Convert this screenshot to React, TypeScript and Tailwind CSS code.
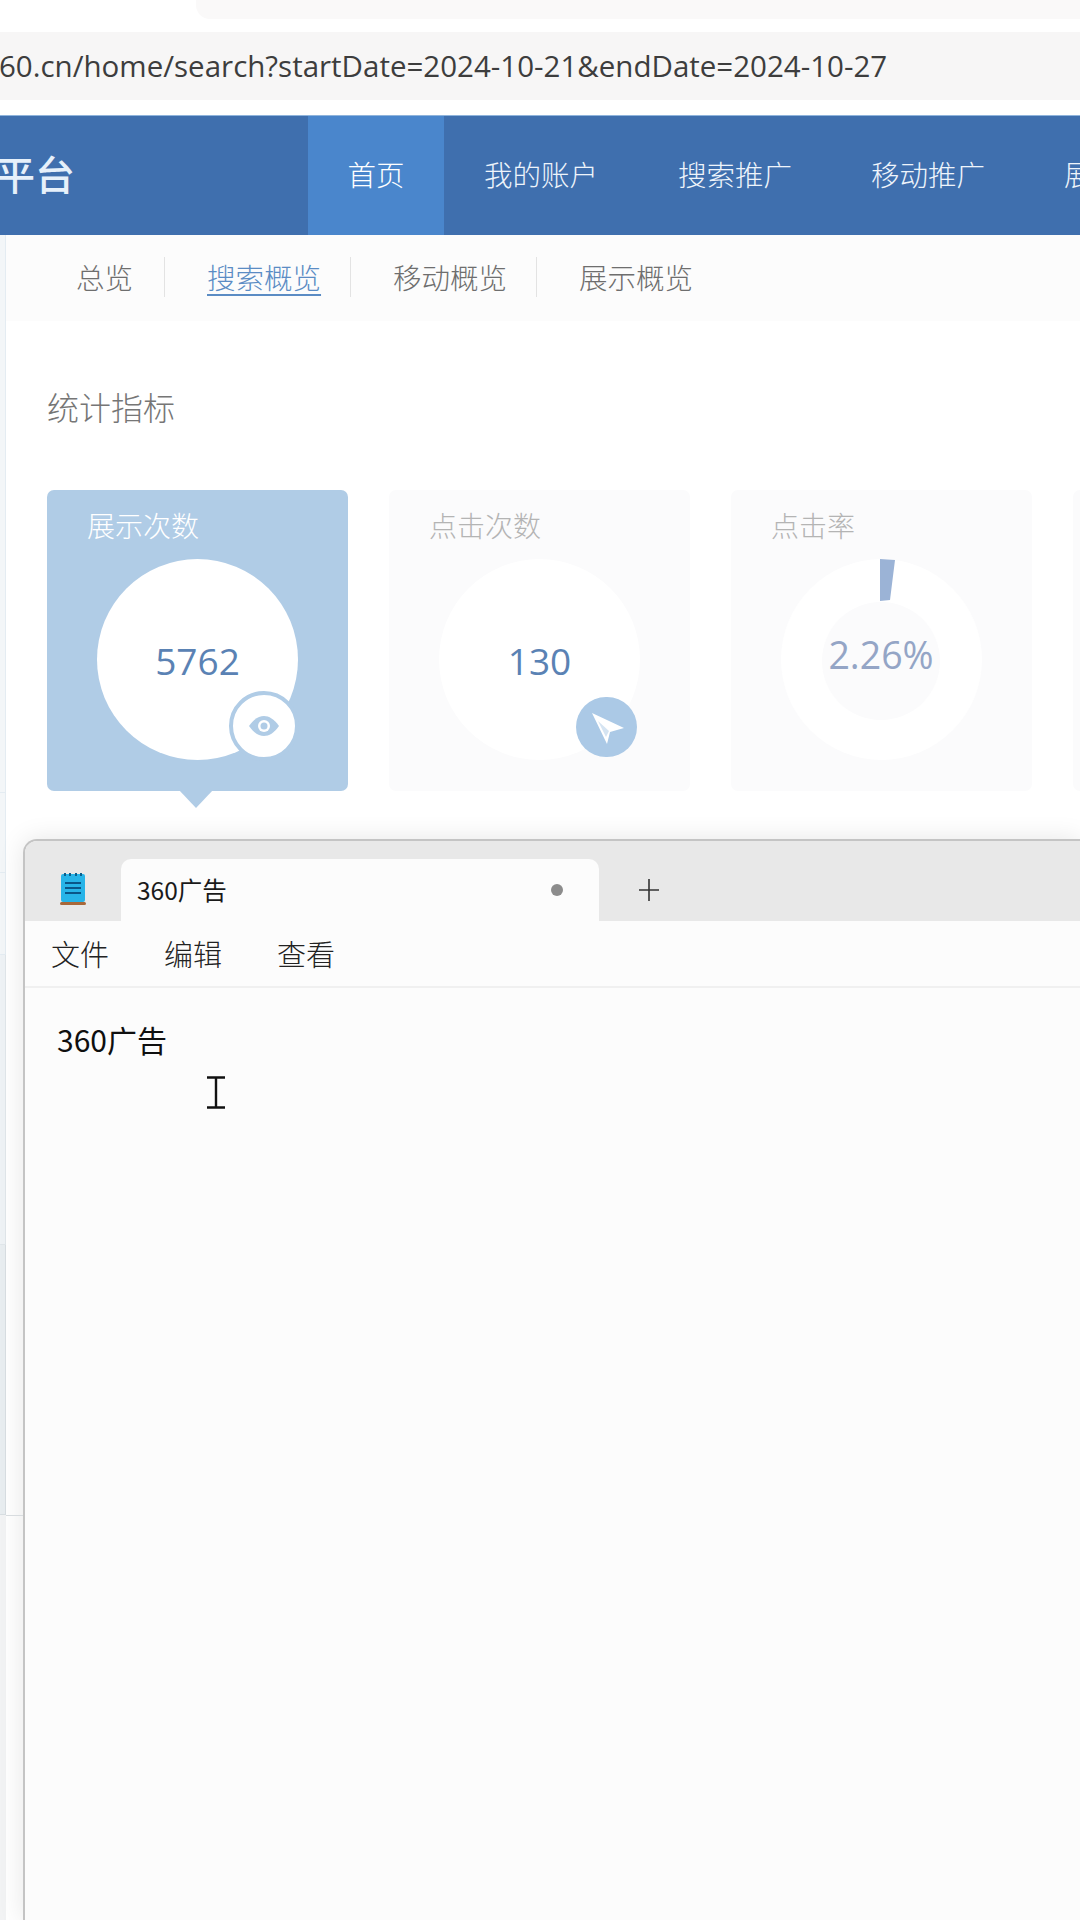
import React from "react";

const cjk = "font-['Noto_Sans_CJK_SC','Noto_Sans',sans-serif]";
const num = "font-['Open_Sans','Noto_Sans_CJK_SC',sans-serif]";

function Card({ title, active, children }: { title: string; active?: boolean; children: React.ReactNode }) {
  return (
    <div className={`relative flex h-[301px] w-[301px] shrink-0 flex-col items-center rounded-[7px] ${active ? "bg-[#b0cce6]" : "bg-[#fbfbfc]"}`}>
      <div className={`${cjk} mt-[17px] ml-[40px] self-start text-[28px] leading-[36px] font-light ${active ? "text-white" : "text-[#b4b4b4]"}`}>{title}</div>
      <div className="relative mt-[16px] h-[201px] w-[201px] rounded-full bg-white">{children}</div>
      {active && <div className="absolute top-[300px] left-[132px] h-0 w-0 border-x-[17px] border-t-[18px] border-x-transparent border-t-[#b0cce6]" />}
    </div>
  );
}

export default function App() {
  return (
    <div className="flex h-[1920px] w-[1080px] flex-col overflow-hidden bg-white">
      <div className="flex h-[19px] shrink-0 justify-end">
        <div className="h-full w-[884px] rounded-bl-[14px] bg-[#faf9f9]" />
      </div>
      <div className={`${num} mt-[13px] flex h-[68px] shrink-0 items-center overflow-hidden bg-[#f7f6f6] text-[29.5px] text-[#3d3d3d]`}>
        <span className="-ml-[1px] whitespace-nowrap">60.cn/home/search?startDate=2024-10-21&amp;endDate=2024-10-27</span>
      </div>
      <div className={`${cjk} mt-[15px] flex h-[120px] shrink-0 items-stretch overflow-hidden border-t border-[#8fb4dc] bg-[#3f6fae] text-[28.5px] font-light text-[#eef4fb]`}>
        <div className="flex w-[308px] shrink-0 items-center pb-[6px]">
          <span className="-ml-[5px] text-[40px] font-medium text-[#e6f0fa]">平台</span>
        </div>
        <div className="flex w-[136px] shrink-0 items-center justify-center bg-[#4a86cc] pb-[2px] text-white">首页</div>
        <div className="ml-[40px] flex shrink-0 items-center whitespace-nowrap pb-[2px]">我的账户</div>
        <div className="ml-[80px] flex shrink-0 items-center whitespace-nowrap pb-[2px]">搜索推广</div>
        <div className="ml-[79px] flex shrink-0 items-center whitespace-nowrap pb-[2px]">移动推广</div>
        <div className="ml-[79px] flex shrink-0 items-center whitespace-nowrap pb-[2px]">展示推广</div>
      </div>
      <div className="flex min-h-0 flex-1">
        <div className="flex w-[6px] shrink-0 flex-col bg-[#f3f6f8]">
          <div className="h-[558px] shrink-0 border-r border-b border-[#e4ecf2]" />
          <div className="h-[80px] shrink-0 border-r border-b border-[#e4ecf2]" />
          <div className="h-[82px] shrink-0 border-r border-b border-[#e4ecf2]" />
          <div className="h-[290px] shrink-0 border-r border-b border-[#e0e6ea] bg-[#eef2f5]" />
          <div className="h-[270px] shrink-0 border-r border-b border-[#d8dee2] bg-[#e8edf0]" />
          <div className="flex-1 bg-[#f2f3f4]" />
        </div>
        <div className="flex min-w-0 flex-1 flex-col">
          <div className={`${cjk} flex h-[86px] shrink-0 items-center bg-[#fcfcfc] pb-[2px] text-[28.5px] font-light text-[#6e6e6e]`}>
            <span className="ml-[70px]">总览</span>
            <div className="ml-[31px] h-[40px] w-px bg-[#e3e3e3]" />
            <span className="ml-[42px] text-[#5b8cc4] underline underline-offset-[5px]">搜索概览</span>
            <div className="ml-[29px] h-[40px] w-px bg-[#e3e3e3]" />
            <span className="ml-[42px]">移动概览</span>
            <div className="ml-[29px] h-[40px] w-px bg-[#e3e3e3]" />
            <span className="ml-[42px]">展示概览</span>
          </div>
          <div className={`${cjk} mt-[62px] ml-[41px] text-[32px] leading-[46px] font-light text-[#767676]`}>统计指标</div>
          <div className="mt-[61px] ml-[41px] flex gap-[41px]">
            <Card title="展示次数" active>
              <div className={`${num} flex h-full items-center justify-center pt-[2px] text-[37px] text-[#5a82b4]`}>5762</div>
              <div className="absolute top-[132px] left-[132px] flex h-[70px] w-[70px] items-center justify-center rounded-full border-[4px] border-[#b0cce6] bg-white">
                <svg width="30" height="20" viewBox="0 0 30 20">
                  <path d="M0 10C5 3 10 0 15 0s10 3 15 10c-5 7-10 10-15 10S5 17 0 10z" fill="#b0cce6" />
                  <circle cx="15" cy="10" r="6" fill="#fff" />
                  <circle cx="15" cy="10" r="3.5" fill="#b0cce6" />
                </svg>
              </div>
            </Card>
            <Card title="点击次数">
              <div className={`${num} flex h-full items-center justify-center pt-[2px] text-[37px] text-[#5a82b4]`}>130</div>
              <div className="absolute top-[138px] left-[137px] h-[60px] w-[61px] rounded-full bg-[#abc9e6]">
                <svg width="61" height="60" viewBox="0 0 61 60">
                  <path d="M16 16l32 15-14 4-3 12z" fill="#fff" />
                  <path d="M22 24l11 10-3 6z" fill="#d5e4f2" />
                </svg>
              </div>
            </Card>
            <Card title="点击率">
              <svg className="absolute top-0 left-0" width="201" height="44" viewBox="0 0 201 44">
                <path d="M99 0l15 1-5 40-10 1z" fill="#9bb3d6" />
              </svg>
              <div className={`${num} absolute top-[43px] left-[41px] flex h-[118px] w-[118px] items-center justify-center rounded-full bg-[#fbfbfc] pb-[12px] text-[37.5px] whitespace-nowrap text-[#94a5c6]`}>2.26%</div>
            </Card>
            <Card title="" />
          </div>
          <div className={`${cjk} relative mt-[48px] ml-[17px] flex min-h-0 flex-1 flex-col rounded-tl-[14px] border-t-2 border-l-2 border-[#c4c4c4] bg-[#fcfcfc] shadow-[0_0_26px_rgba(0,0,0,0.1)]`}>
            <div className="absolute top-[674px] -left-[19px] h-px w-[17px] bg-[#d8dcdf]" />
            <div className="flex h-[80px] shrink-0 items-end rounded-tl-[12px] bg-[#e8e8e8]">
              <div className="flex h-[62px] w-[96px] shrink-0 items-center justify-center pb-[2px]">
                <svg width="26" height="34" viewBox="0 0 26 34">
                  <rect x="1" y="2" width="24" height="28" rx="2" fill="#27b4e8" />
                  <path d="M5 1v3M10 1v3M16 1v3M21 1v3" stroke="#0b5f8c" strokeWidth="2" />
                  <path d="M5 11h16M5 16h16M5 21h16" stroke="#0a5688" strokeWidth="2" />
                  <rect x="0" y="30" width="26" height="3" rx="1.5" fill="#a8683a" />
                </svg>
              </div>
              <div className="flex h-[62px] w-[478px] shrink-0 items-center rounded-t-[10px] bg-[#fcfcfc] pl-[16px] text-[24.5px] text-[#1a1a1a]">
                <span>360广告</span>
                <div className="mr-[36px] ml-auto h-[12px] w-[12px] rounded-full bg-[#8c8c8c]" />
              </div>
              <div className="flex h-[62px] w-[100px] shrink-0 items-center justify-center">
                <svg width="20" height="22" viewBox="0 0 20 22">
                  <path d="M10 0v22M0 11h20" stroke="#333" strokeWidth="1.6" />
                </svg>
              </div>
            </div>
            <div className="flex h-[67px] shrink-0 items-center gap-[55px] border-b-2 border-[#f0f0f0] pl-[26px] text-[29px] font-light text-[#222]">
              <span>文件</span>
              <span>编辑</span>
              <span>查看</span>
            </div>
            <div className="px-[32px] pt-[31px] text-[30px] leading-[40px] text-[#0f0f0f]">360广告</div>
            <div className="mt-[17px] ml-[181px]">
              <svg className="block" width="20" height="33" viewBox="0 0 20 33">
                <path d="M1 1.5h18M1 31.5h18M10 1.5v30" stroke="#111" strokeWidth="2.4" fill="none" />
              </svg>
            </div>
          </div>
        </div>
      </div>
    </div>
  );
}
